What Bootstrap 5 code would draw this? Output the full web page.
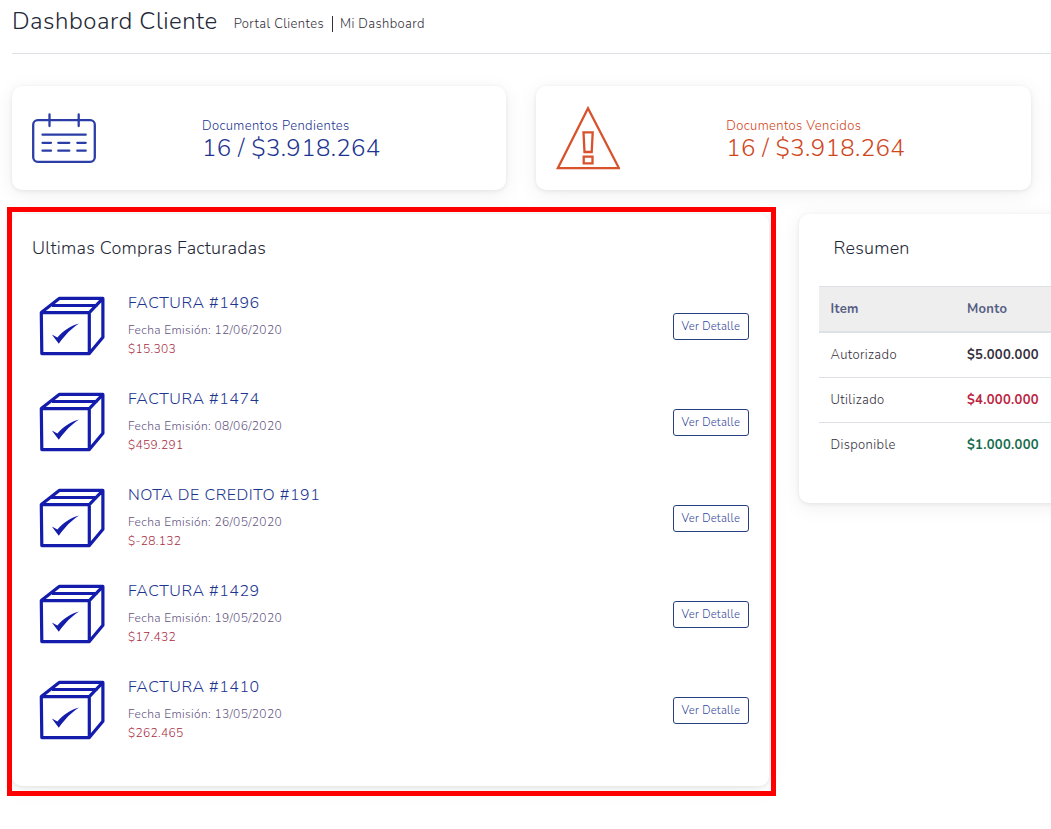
<!DOCTYPE html>
<html lang="es">
<head>
<meta charset="utf-8">
<meta name="viewport" content="width=device-width, initial-scale=1">
<title>Dashboard Cliente</title>
<link href="https://cdn.jsdelivr.net/npm/bootstrap@5.3.0/dist/css/bootstrap.min.css" rel="stylesheet">
<style>
  body {
    font-family: Nunito, "Open Sans", sans-serif;
    font-size: 13px; font-weight: 340; line-height: 1.6; letter-spacing: .38px;
    color: #332e3b; background: #fff; overflow: hidden;
  }
  .page { padding: 9px 0 0 12px; overflow: hidden; min-height: 829px; }
  .crumbs { height: 24px; }
  .crumbs h1 { font-size: 24px; font-weight: 340; line-height: 1; color: #1f2937; letter-spacing: .49px; }
  .crumbs nav { margin-top: 7px; }
  .crumbs a { color: #332e3b; text-decoration: none; line-height: 16px; padding: 0 7.500px; }
  .crumbs a:first-child { padding-left: 8px; }
  .crumbs a + a { border-left: 1px solid #332e38; }
  .divider { height: 1px; background: #dee2e6; margin: 20px 0 32px; }
  .wide { width: 1573px; --bs-gutter-x: 30px; margin-left: -15px; }
  .panel {
    border: 0; border-radius: 10px; color: inherit;
    box-shadow: 0 4px 20px 1px rgba(0,0,0,.06), 0 1px 4px rgba(0,0,0,.08);
  }
  .panel .card-body { padding: 20px; }
  .stat { height: 104px; }
  .stat-text { margin-left: 106px; }
  .stat-text p { line-height: 20px; }
  .stat-text .amount { font-size: 24px; line-height: 24px; padding-bottom: 1px; letter-spacing: .37px; }
  .blue { color: #1c3590; }
  .orange { color: #cf4520; }
  .panel h2 { font-size: 18px; font-weight: 340; line-height: 28px; color: #1f2937; letter-spacing: .23px; }
  .purchases { height: 572px; }
  .purchase { height: 96px; }
  .purchase h3 { font-size: 16px; font-weight: 340; line-height: 24px; margin: -2px 0 6px; color: #1c3590; letter-spacing: .54px; }
  .purchase p { font-size: 12px; line-height: 19px; color: #5f5480; letter-spacing: .35px; }
  .purchase .price { color: #a82c3f; padding-bottom: 1px; letter-spacing: .3px; }
  .detail {
    --bs-btn-color: #33479c; --bs-btn-border-color: #263f80; --bs-btn-font-weight: 340;
    --bs-btn-padding-x: 8px; --bs-btn-padding-y: 4px; --bs-btn-font-size: 11.3px;
    --bs-btn-line-height: 17px; --bs-btn-border-radius: 3px; letter-spacing: .24px; width: 76px;
    white-space: nowrap;
  }
  .marker { left: -5px; top: -7px; width: 769px; height: 589px; border: 5px solid #f00; pointer-events: none; }
  .summary { height: 289px; }
  .summary h2 { margin: 0 0 24px 15px; }
  .summary table { --bs-table-color: #332e3b; margin: 0; table-layout: fixed; border-color: #dee2e6; }
  .summary td, .summary th { padding: 12px; line-height: 20px; height: 45px; border: 0 solid #dee2e6; border-width: 1px 0 0; }
  .summary thead th { background: #eee; color: #565f83; font-weight: 700; height: 45px; padding: 10px 12px 12px; border-bottom-width: 2px; letter-spacing: .3px; }
  .summary tbody tr:first-child td { border-top: 0; height: 45px; padding-top: 12px; }
  .summary th:first-child { width: 136.5px; }
  .summary td + td { font-weight: 700; letter-spacing: .3px; }
  .summary .used { color: #bb2341; }
  .summary .free { color: #156c4c; }
</style>
</head>
<body>
<svg class="d-none">
  <symbol id="box" viewBox="0 0 80 80">
    <g fill="none" stroke="#141cab" stroke-width="3.2" stroke-linejoin="round">
      <path d="M9.300 26.600H57.300V67.600H9.800ZM9.300 26.600 27.200 12.400H70.900V51.200L57.300 67.600M57.300 26.600 70.900 12.400M20 19.500H65.400"/>
    </g>
    <path fill="#141cab" d="M19.800 48.600l5.600 2.800c6-6.800 12.600-11.400 21.600-14-8 5.200-14 11.500-20.200 20.300z"/>
  </symbol>
</svg>
<main class="page">
  <header class="crumbs d-flex align-items-start">
    <h1 class="mb-0 me-2">Dashboard Cliente</h1>
    <nav class="d-flex">
      <a href="#">Portal Clientes</a>
      <a href="#">Mi Dashboard</a>
    </nav>
  </header>
  <div class="divider"></div>

  <div class="row wide flex-nowrap">
    <div class="col-4 mb-4">
      <div class="card panel stat">
        <div class="card-body d-flex align-items-center blue">
          <svg width="64" height="64" viewBox="0 0 64 64" fill="none" stroke="#2b3ea8" stroke-width="2.3" stroke-linecap="round">
            <rect x="1.200" y="14.200" width="61.600" height="41.600" rx="4.500"/>
            <path d="M17.500 8.500V20M46.700 8.500V20M10.500 28.700H53.700M10.500 36.800H19M26.300 36.800H37.300M45.300 36.800H53.700M10.500 44.700H19M26.300 44.700H37.300M45.300 44.700H53.700"/>
          </svg>
          <div class="stat-text">
            <p class="mb-0">Documentos Pendientes</p>
            <p class="amount mb-0">16 / $3.918.264</p>
          </div>
        </div>
      </div>
    </div>
    <div class="col-4 mb-4">
      <div class="card panel stat">
        <div class="card-body d-flex align-items-center orange">
          <svg width="64" height="64" viewBox="0 0 64 64" fill="none" stroke="#d8522c" stroke-width="2.3">
            <path d="M32 2.300 1.800 62.200H63ZM27.500 26.300H36.700L35.700 46H28.500ZM27.700 50.700H36.500V57.300H27.700Z"/>
          </svg>
          <div class="stat-text">
            <p class="mb-0">Documentos Vencidos</p>
            <p class="amount mb-0">16 / $3.918.264</p>
          </div>
        </div>
      </div>
    </div>
    <div class="col-4 mb-4"><div class="card panel stat"></div></div>
  </div>

  <div class="row wide flex-nowrap">
    <div class="col-6">
      <section class="card panel purchases">
        <div class="card-body">
          <h2 class="mb-3">Ultimas Compras Facturadas</h2>
          <div id="list"></div>
        </div>
        <div class="marker position-absolute"></div>
      </section>
    </div>
    <div class="col-6">
      <section class="card panel summary">
        <div class="card-body">
          <h2>Resumen</h2>
          <table class="table">
            <thead><tr><th>Item</th><th>Monto</th></tr></thead>
            <tbody>
              <tr><td>Autorizado</td><td>$5.000.000</td></tr>
              <tr><td>Utilizado</td><td class="used">$4.000.000</td></tr>
              <tr><td>Disponible</td><td class="free">$1.000.000</td></tr>
            </tbody>
          </table>
        </div>
      </section>
    </div>
  </div>
</main>
<script src="https://cdn.jsdelivr.net/npm/bootstrap@5.3.0/dist/js/bootstrap.bundle.min.js"></script>
<script>
  const purchases = [
    ['FACTURA #1496', '12/06/2020', '$15.303'],
    ['FACTURA #1474', '08/06/2020', '$459.291'],
    ['NOTA DE CREDITO #191', '26/05/2020', '$-28.132'],
    ['FACTURA #1429', '19/05/2020', '$17.432'],
    ['FACTURA #1410', '13/05/2020', '$262.465']
  ];
  document.getElementById('list').innerHTML = purchases.map(([name, date, price]) => `
    <article class="purchase d-flex align-items-center">
      <svg class="me-3 flex-shrink-0" width="80" height="80"><use href="#box"/></svg>
      <div class="flex-grow-1">
        <h3>${name}</h3>
        <p class="mb-0">Fecha Emisión: ${date}</p>
        <p class="mb-0 price">${price}</p>
      </div>
      <button class="btn detail">Ver Detalle</button>
    </article>`).join('');
</script>
</body>
</html>
